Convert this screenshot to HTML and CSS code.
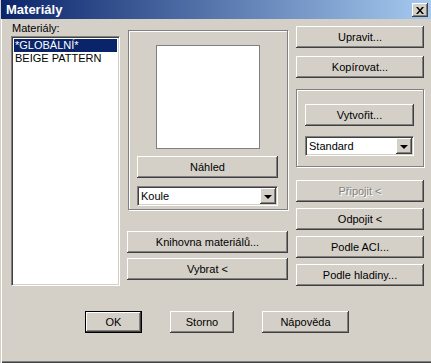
FILE: index.html
```html
<!DOCTYPE html>
<html>
<head>
<meta charset="utf-8">
<link rel="stylesheet" href="styles.css">
</head>
<body>
<div class="window">
  <div class="titlebar">
    <span class="title">Materiály</span>
    <span class="close">
      <svg width="8" height="7" viewBox="0 0 8 7"><path d="M0 0h2l2 2.5 2-2.5h2l-3 3.5 3 3.5h-2l-2-2.5-2 2.5h-2l3-3.5z" fill="#000"/></svg>
    </span>
  </div>
  <div class="content">
    <div class="columns">
      <div class="col-left">
        <div class="label">Materiály:</div>
        <div class="listbox">
          <div class="item selected">*GLOBÁLNÍ*</div>
          <div class="item">BEIGE PATTERN</div>
        </div>
      </div>
      <div class="col-mid">
        <div class="group preview-group">
          <div class="preview"></div>
          <div class="btn btn-wide">Náhled</div>
          <div class="combo">
            <span class="combo-text">Koule</span>
            <span class="combo-btn"><span class="arrow"></span></span>
          </div>
        </div>
        <div class="mid-buttons">
          <div class="btn">Knihovna materiálů...</div>
          <div class="btn">Vybrat &lt;</div>
        </div>
      </div>
      <div class="col-right">
        <div class="btn">Upravit...</div>
        <div class="btn">Kopírovat...</div>
        <div class="group create-group">
          <div class="btn">Vytvořit...</div>
          <div class="combo">
            <span class="combo-text">Standard</span>
            <span class="combo-btn"><span class="arrow"></span></span>
          </div>
        </div>
        <div class="attach-buttons">
          <div class="btn disabled">Připojit &lt;</div>
          <div class="btn">Odpojit &lt;</div>
          <div class="btn">Podle ACI...</div>
          <div class="btn">Podle hladiny...</div>
        </div>
      </div>
    </div>
    <div class="footer">
      <div class="btn btn-default btn-ok">OK</div>
      <div class="btn btn-storno">Storno</div>
      <div class="btn btn-help">Nápověda</div>
    </div>
  </div>
</div>
</body>
</html>
```

FILE: styles.css
```css
* { box-sizing: border-box; }
html, body {
  margin: 0;
  padding: 0;
  width: 431px;
  height: 363px;
  overflow: hidden;
  background: #d4d0c8;
  font-family: "Liberation Sans", Arial, sans-serif;
  font-size: 11px;
  color: #000;
}
.window {
  width: 431px;
  height: 363px;
  background: #d4d0c8;
  border-left: 1px solid #d4d0c8;
  box-shadow: inset 1px 0 0 #fff, inset 0 -1px 0 #404040, inset 0 -2px 0 #808080;
  display: flex;
  flex-direction: column;
}
.titlebar {
  height: 19px;
  background: linear-gradient(to right, #0a246a, #a6caf0);
  display: flex;
  align-items: center;
  justify-content: space-between;
  padding: 0 3px 0 5px;
}
.title {
  color: #fff;
  font-weight: bold;
  font-size: 13px;
}
.close {
  width: 16px;
  height: 14px;
  background: #d4d0c8;
  box-shadow: inset -1px -1px #404040, inset 1px 1px #fff, inset -2px -2px #808080;
  display: flex;
  align-items: center;
  justify-content: center;
  margin-top: 1px;
}
.content {
  display: flex;
  flex-direction: column;
  flex: 1;
}
.columns {
  display: flex;
  height: 267px;
  padding-left: 10px;
}
.col-left {
  width: 109px;
  display: flex;
  flex-direction: column;
  padding-top: 3px;
}
.label {
  height: 14px;
  line-height: 12px;
  padding-left: 1px;
}
.listbox {
  height: 251px;
  background: #fff;
  border: 1px solid;
  border-color: #808080 #fff #fff #808080;
  box-shadow: inset 1px 1px #404040, inset -1px -1px #d4d0c8;
  padding: 2px;
}
.item {
  height: 13px;
  line-height: 13px;
  padding-left: 1px;
  white-space: nowrap;
}
.item.selected {
  background: #0a246a;
  color: #fff;
}
.col-mid {
  width: 160px;
  margin-left: 8px;
  display: flex;
  flex-direction: column;
  padding-top: 11px;
}
.group {
  border: 1px solid #808080;
  box-shadow: 1px 1px 0 #fff, inset 1px 1px 0 #fff;
}
.preview-group {
  height: 180px;
  display: flex;
  flex-direction: column;
  align-items: center;
  padding: 14px 9px 0 8px;
}
.preview {
  width: 104px;
  height: 104px;
  background: #fff;
  border: 1px solid #808080;
  margin-bottom: 7px;
}
.btn {
  height: 22px;
  background: #d4d0c8;
  box-shadow: inset -1px -1px #404040, inset 1px 1px #fff, inset -2px -2px #808080, inset 2px 2px #d4d0c8;
  display: flex;
  align-items: center;
  justify-content: center;
  white-space: nowrap;
  padding-bottom: 1px;
  width: 100%;
}
.btn.disabled {
  color: #808080;
  text-shadow: 1px 1px 0 #fff;
}
.preview-group .btn {
  margin-bottom: 8px;
}
.combo {
  width: 100%;
  height: 20px;
  background: #fff;
  border: 1px solid;
  border-color: #808080 #fff #fff #808080;
  box-shadow: inset 1px 1px #404040, inset -1px -1px #d4d0c8;
  display: flex;
  align-items: center;
  justify-content: space-between;
  padding: 1px 1px 1px 2px;
}
.combo-text {
  padding-left: 1px;
}
.combo-btn {
  width: 16px;
  height: 16px;
  background: #d4d0c8;
  box-shadow: inset -1px -1px #404040, inset 1px 1px #fff, inset -2px -2px #808080, inset 2px 2px #d4d0c8;
  display: flex;
  align-items: center;
  justify-content: center;
}
.arrow {
  width: 0;
  height: 0;
  border-left: 4px solid transparent;
  border-right: 4px solid transparent;
  border-top: 4px solid #000;
  margin-top: 1px;
}
.mid-buttons {
  margin-top: 21px;
  margin-left: -1px;
  display: flex;
  flex-direction: column;
  gap: 5px;
}
.col-right {
  width: 128px;
  margin-left: 8px;
  padding-top: 7px;
  display: flex;
  flex-direction: column;
}
.col-right > .btn + .btn {
  margin-top: 8px;
}
.create-group {
  margin-top: 11px;
  height: 78px;
  padding: 14px 9px 0 8px;
  display: flex;
  flex-direction: column;
}
.create-group .btn {
  margin-bottom: 10px;
}
.attach-buttons {
  margin-top: 13px;
  display: flex;
  flex-direction: column;
  gap: 6px;
}
.footer {
  display: flex;
  gap: 28px;
  padding-left: 84px;
  margin-top: 25px;
}
.btn-ok { width: 57px; }
.btn-storno { width: 64px; }
.btn-help { width: 87px; }
.btn-default {
  box-shadow: inset 0 0 0 1px #000, inset -2px -2px #404040, inset 2px 2px #fff, inset -3px -3px #808080;
}
```
